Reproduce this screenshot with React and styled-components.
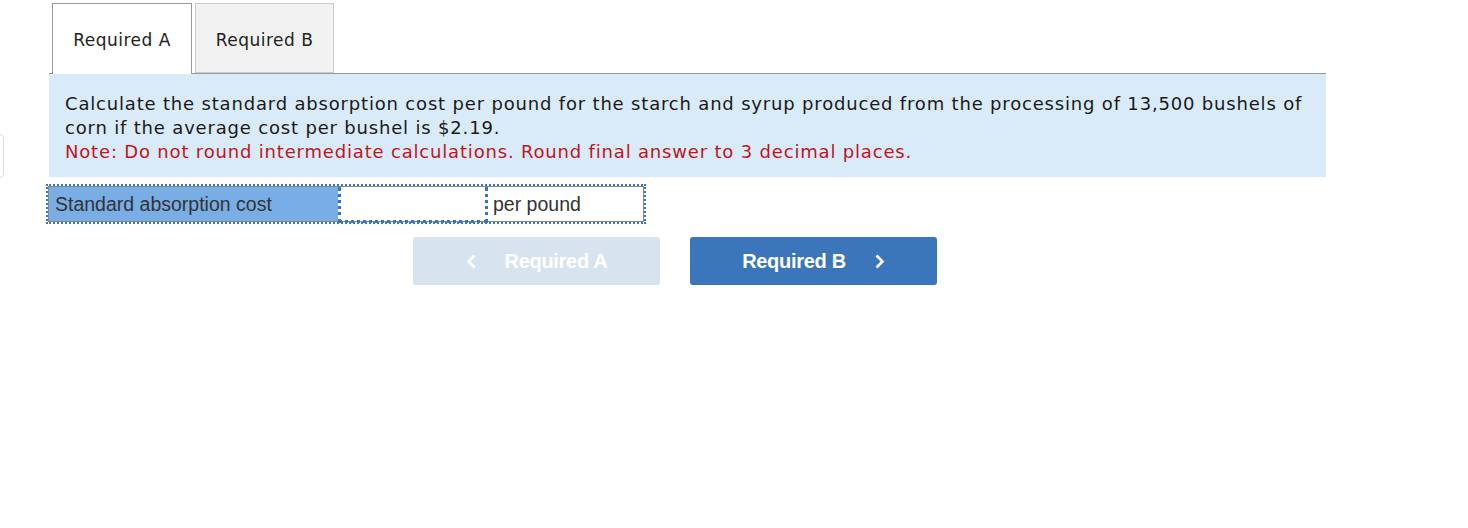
import React from "react";
import styled, { createGlobalStyle } from "styled-components";

const Global = createGlobalStyle`
  body {
    margin: 0;
    background: #fff;
    font-family: "DejaVu Sans", Verdana, sans-serif;
  }
`;

const Page = styled.div`
  padding: 3px 0 0 49px;
  width: 1277px;
`;

const TabList = styled.div`
  display: flex;
  gap: 3px;
  padding-left: 3px;
  border-bottom: 1px solid #999;
  height: 70px;
`;

const Tab = styled.div`
  width: ${(p) => (p.$active ? "140px" : "139px")};
  height: ${(p) => (p.$active ? "71px" : "70px")};
  box-sizing: border-box;
  border: 1px solid ${(p) => (p.$active ? "#999" : "#ccc")};
  border-bottom: ${(p) => (p.$active ? "none" : "1px solid #ccc")};
  background: ${(p) => (p.$active ? "#fff" : "#f2f2f2")};
  display: flex;
  align-items: center;
  justify-content: center;
  font-size: 17px;
  letter-spacing: 0.5px;
  color: #222;
  padding-top: ${(p) => (p.$active ? "2px" : "4px")};
`;

const Prompt = styled.div`
  background: #d9ebf9;
  padding: 18px 16px 13px;
  font-size: 18px;
  letter-spacing: 0.82px;
  line-height: 24px;
  color: #1a1a1a;
`;

const Note = styled.div`
  color: #c0161b;
`;

const AnswerRow = styled.div`
  margin: 7px 0 0 -3px;
  width: 600px;
  box-sizing: border-box;
  border: 2px dotted #3a76bf;
  display: flex;
  font-family: "Liberation Sans", Arial, sans-serif;
  font-size: 19.5px;
  color: #333;
`;

const Inner = styled.div`
  display: flex;
  width: 100%;
  border: 1px solid #888;
  height: 34px;
`;

const Label = styled.div`
  width: 289px;
  background: #79ade6;
  padding-left: 6px;
  box-sizing: border-box;
  display: flex;
  align-items: center;
`;

const Input = styled.div`
  width: 150px;
  box-sizing: border-box;
  border-left: 3px dotted #3a76bf;
  border-right: 3px dotted #3a76bf;
  border-bottom: 3px dotted #3a76bf;
  margin-bottom: -2px;
`;

const Unit = styled.div`
  flex: 1;
  padding-left: 5px;
  display: flex;
  align-items: center;
`;

const Nav = styled.div`
  display: flex;
  gap: 30px;
  margin: 13px 0 0 364px;
`;

const NavButton = styled.button`
  width: 247px;
  height: 48px;
  border: none;
  border-radius: 3px;
  background: ${(p) => (p.disabled ? "#d8e3f0" : "#3a76b9")};
  color: #fff;
  font-family: "Liberation Sans", Arial, sans-serif;
  font-weight: bold;
  font-size: 20px;
  letter-spacing: -0.3px;
  display: flex;
  align-items: center;
  justify-content: center;
  gap: 28px;
  padding: 0;
`;

const SideTab = styled.div`
  position: fixed;
  left: -30px;
  top: 134px;
  width: 32px;
  height: 42px;
  border: 1px solid #ddd;
  border-radius: 4px;
  background: #fff;
`;

const Chevron = ({ dir }) => (
  <svg width="11" height="15" viewBox="0 0 11 15">
    <path
      d={dir === "left" ? "M8.5 1.5 L2.5 7.5 L8.5 13.5" : "M2.5 1.5 L8.5 7.5 L2.5 13.5"}
      fill="none"
      stroke="#fff"
      strokeWidth="2.6"
    />
  </svg>
);

export default function App() {
  return (
    <>
      <Global />
      <SideTab />
      <Page>
        <TabList>
          <Tab $active>Required A</Tab>
          <Tab>Required B</Tab>
        </TabList>
        <Prompt>
          Calculate the standard absorption cost per pound for the starch and syrup produced from the processing of 13,500 bushels of corn if the average cost per bushel is $2.19.
          <Note>Note: Do not round intermediate calculations. Round final answer to 3 decimal places.</Note>
        </Prompt>
        <AnswerRow>
          <Inner>
            <Label>Standard absorption cost</Label>
            <Input />
            <Unit>per pound</Unit>
          </Inner>
        </AnswerRow>
        <Nav>
          <NavButton disabled>
            <Chevron dir="left" />
            <span>Required A</span>
          </NavButton>
          <NavButton>
            <span>Required B</span>
            <Chevron dir="right" />
          </NavButton>
        </Nav>
      </Page>
    </>
  );
}
